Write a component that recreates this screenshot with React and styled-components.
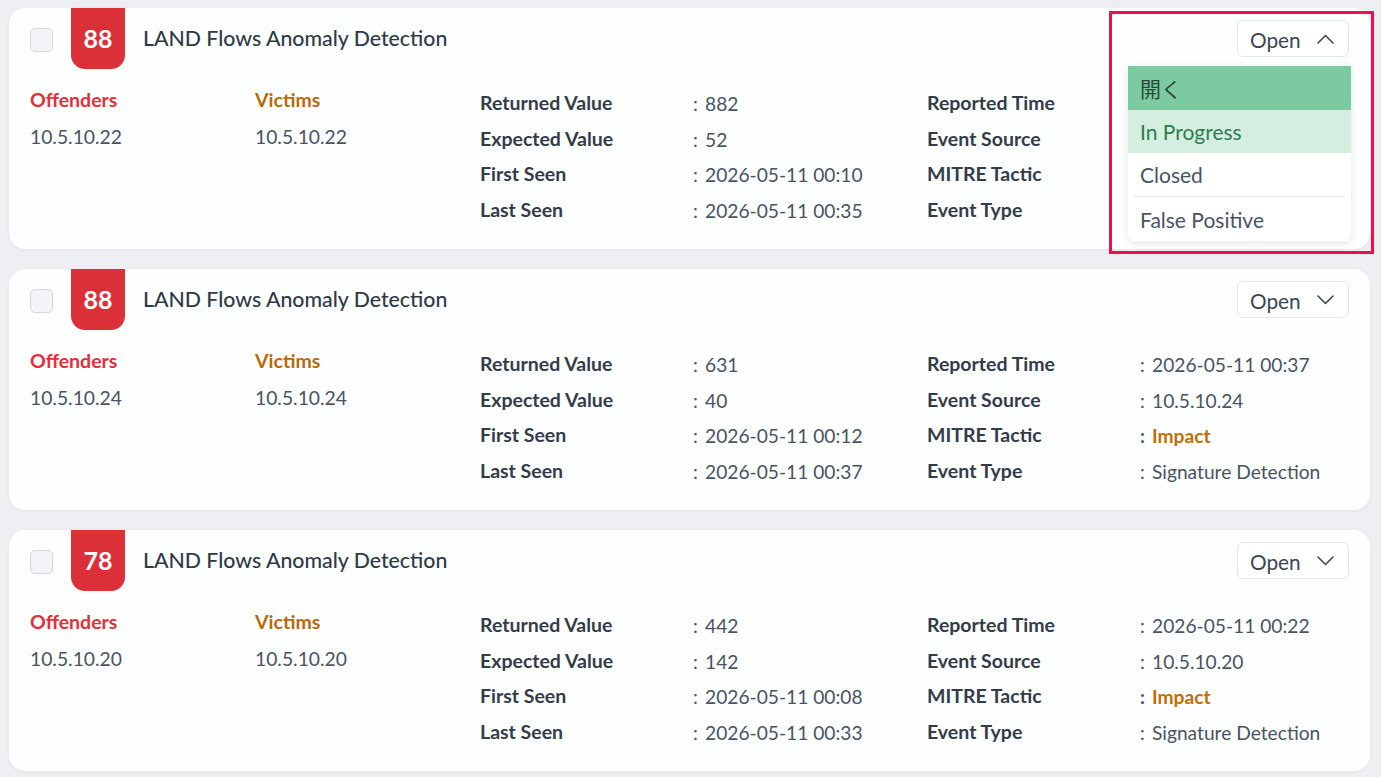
import React from "react";
import styled, { createGlobalStyle } from "styled-components";

const GlobalStyle = createGlobalStyle`
  html, body {
    margin: 0;
    padding: 0;
    background: #eeeff2;
    font-family: Lato, "Noto Sans CJK JP", "Open Sans", sans-serif;
  }
`;

const Page = styled.div`
  display: flex;
  flex-direction: column;
  gap: 20px;
  padding: 8px 11px 8px 9px;
`;

const Card = styled.div`
  background: #fdfefe;
  border-radius: 16px;
  box-shadow: 0 1px 4px rgba(16, 24, 40, 0.05);
  padding: 0 21px 22px 21px;
  height: 241px;
  box-sizing: border-box;
`;

const Header = styled.div`
  display: flex;
  align-items: center;
  height: 61px;
  gap: 18px;
`;

const Checkbox = styled.div`
  width: 23px;
  height: 24px;
  margin-top: 3px;
  border: 1px solid #d3d8df;
  border-radius: 5px;
  background: #f3f4f7;
  box-sizing: border-box;
`;

const Badge = styled.div`
  width: 54px;
  height: 61px;
  align-self: flex-start;
  background: #dc3039;
  border-radius: 0 0 14px 14px;
  color: #fff;
  font-size: 25px;
  font-weight: 700;
  display: flex;
  align-items: center;
  justify-content: center;
  padding-bottom: 1px;
  box-sizing: border-box;
`;

const Title = styled.div`
  flex: 1;
  font-size: 21.3px;
  font-weight: 500;
  color: #2f3a47;
  margin-bottom: 2px;
`;

const StatusWrap = styled.div`
  position: relative;
`;

const StatusButton = styled.div`
  width: 112px;
  height: 37px;
  box-sizing: border-box;
  border: 1px solid #e3e6eb;
  border-radius: 6px;
  background: #fff;
  display: flex;
  align-items: center;
  gap: 16px;
  padding-left: 12px;
  padding-top: 1px;
  font-size: 20.8px;
  color: #3d4654;
`;

const Menu = styled.div`
  position: absolute;
  top: 46px;
  right: -2px;
  width: 223px;
  background: #fff;
  border-radius: 0 0 6px 6px;
  box-shadow: 0 2px 8px rgba(16, 24, 40, 0.1);
  overflow: hidden;
  z-index: 2;
`;

const MenuItem = styled.div`
  height: ${(p) => p.$h}px;
  display: flex;
  align-items: center;
  padding-left: 12px;
  font-size: 21px;
  background: ${(p) => p.$bg || "#fff"};
  color: ${(p) => p.$color || "#4a5361"};
`;

const Divider = styled.div`
  height: 1px;
  margin: 0 6px;
  background: #e2e5ea;
`;

const Highlight = styled.div`
  position: absolute;
  top: -9px;
  right: -25px;
  width: 265px;
  height: 243px;
  border: 3px solid #f20c50;
  box-sizing: border-box;
  pointer-events: none;
  z-index: 3;
`;

const Body = styled.div`
  display: grid;
  grid-template-columns: 225px 225px 447px 1fr;
  margin-top: 16px;
`;

const PartyCol = styled.div`
  display: flex;
  flex-direction: column;
`;

const PartyLabel = styled.div`
  font-size: 19.5px;
  font-weight: 700;
  line-height: 30px;
  color: ${(p) => p.$color};
`;

const PartyValue = styled.div`
  font-size: 19.3px;
  line-height: 44px;
  color: #4a5361;
`;

const InfoGrid = styled.div`
  display: grid;
  grid-template-columns: 213px 1fr;
  grid-auto-rows: 35.5px;
  align-items: center;
`;

const InfoLabel = styled.div`
  font-size: 19.5px;
  font-weight: 700;
  color: #333c48;
`;

const InfoValue = styled.div`
  font-size: 19.2px;
  color: ${(p) => (p.$accent ? "#c06e08" : "#4a5361")};
  font-weight: ${(p) => (p.$accent ? 700 : 400)};
  padding-top: 2px;
  white-space: nowrap;
`;

const Colon = styled.span`
  display: inline-block;
  width: 12px;
  color: #4a5361;
  font-weight: ${(p) => (p.$bold ? 700 : 400)};
`;

const Chevron = ({ up }) => (
  <svg width="17" height="10" viewBox="0 0 17 10" fill="none">
    <polyline
      points={up ? "1,9 8.5,1.5 16,9" : "1,1 8.5,8.5 16,1"}
      stroke="#3d4654"
      strokeWidth="1.6"
      strokeLinecap="round"
      strokeLinejoin="round"
    />
  </svg>
);

const alerts = [
  {
    score: 88,
    ip: "10.5.10.22",
    returned: 882,
    expected: 52,
    first: "2026-05-11 00:10",
    last: "2026-05-11 00:35",
    reported: "2026-05-11 00:37",
    open: true,
  },
  {
    score: 88,
    ip: "10.5.10.24",
    returned: 631,
    expected: 40,
    first: "2026-05-11 00:12",
    last: "2026-05-11 00:37",
    reported: "2026-05-11 00:37",
  },
  {
    score: 78,
    ip: "10.5.10.20",
    returned: 442,
    expected: 142,
    first: "2026-05-11 00:08",
    last: "2026-05-11 00:33",
    reported: "2026-05-11 00:22",
  },
];

// values under the open status menu are covered, so only the label is drawn
const Row = ({ label, children, accent, covered }) => (
  <>
    <InfoLabel>{label}</InfoLabel>
    {covered ? (
      <div />
    ) : (
      <InfoValue $accent={accent}>
        <Colon $bold={accent}>:</Colon>
        {children}
      </InfoValue>
    )}
  </>
);

const AlertCard = ({ a }) => (
  <Card>
    <Header>
      <Checkbox />
      <Badge>{a.score}</Badge>
      <Title>LAND Flows Anomaly Detection</Title>
      <StatusWrap>
        <StatusButton>
          Open <Chevron up={a.open} />
        </StatusButton>
        {a.open && (
          <>
            <Menu>
              <MenuItem $h={44} $bg="#7dcaa0" $color="#2c4a3b">
                開く
              </MenuItem>
              <MenuItem $h={43} $bg="#d4eedf" $color="#2f7d50">
                In Progress
              </MenuItem>
              <MenuItem $h={43}>Closed</MenuItem>
              <Divider />
              <MenuItem $h={44}>False Positive</MenuItem>
            </Menu>
            <Highlight />
          </>
        )}
      </StatusWrap>
    </Header>
    <Body>
      <PartyCol>
        <PartyLabel $color="#e0303b">Offenders</PartyLabel>
        <PartyValue>{a.ip}</PartyValue>
      </PartyCol>
      <PartyCol>
        <PartyLabel $color="#b9690a">Victims</PartyLabel>
        <PartyValue>{a.ip}</PartyValue>
      </PartyCol>
      <InfoGrid>
        <Row label="Returned Value">{a.returned}</Row>
        <Row label="Expected Value">{a.expected}</Row>
        <Row label="First Seen">{a.first}</Row>
        <Row label="Last Seen">{a.last}</Row>
      </InfoGrid>
      <InfoGrid>
        <Row label="Reported Time" covered={a.open}>
          {a.reported}
        </Row>
        <Row label="Event Source" covered={a.open}>
          {a.ip}
        </Row>
        <Row label="MITRE Tactic" accent covered={a.open}>
          Impact
        </Row>
        <Row label="Event Type" covered={a.open}>
          Signature Detection
        </Row>
      </InfoGrid>
    </Body>
  </Card>
);

export default function App() {
  return (
    <>
      <GlobalStyle />
      <Page>
        {alerts.map((a, i) => (
          <AlertCard key={i} a={a} />
        ))}
      </Page>
    </>
  );
}
